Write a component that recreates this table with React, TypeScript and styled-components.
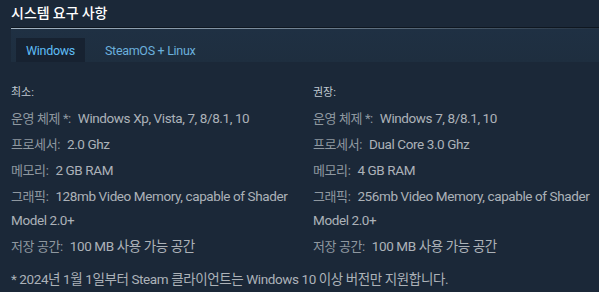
import React, { FC } from "react";
import styled, { createGlobalStyle } from "styled-components";

const GlobalStyle = createGlobalStyle`
  html, body {
    margin: 0;
    padding: 0;
    background: #1b2838;
  }
  body {
    font-family: Roboto, "Noto Sans CJK KR", sans-serif;
    width: 599px;
    height: 292px;
    overflow: hidden;
  }
`;

const Section = styled.section`
  padding-left: 11px;
  color: #acb2b8;
`;

const Title = styled.h2`
  margin: 0;
  height: 27px;
  padding-top: 3px;
  box-sizing: border-box;
  font-size: 14px;
  font-weight: 500;
  color: #ffffff;
  line-height: 18px;
  font-family: "Noto Sans CJK KR", sans-serif;
`;

const Divider = styled.div`
  height: 1px;
  border-top: 1px solid #0f1720;
  background: linear-gradient(90deg, #a3b3c2 0%, #7d8e9e 40%, #3d4d5d 85%, rgba(61, 77, 93, 0.3) 100%);
`;

const TabBar = styled.div`
  display: flex;
  align-items: flex-end;
  gap: 10px;
  height: 33px;
  padding-left: 5px;
  background: linear-gradient(180deg, #1f3043 0%, #1e2e3f 100%);
`;

const Tab = styled.div<{ $active?: boolean }>`
  height: 24px;
  padding: 0 10px;
  display: flex;
  align-items: center;
  font-size: 12.5px;
  letter-spacing: -0.3px;
  color: ${(p) => (p.$active ? "#5fbdf5" : "#6bb0dc")};
  background: ${(p) => (p.$active ? "#172231" : "transparent")};
`;

const Columns = styled.div`
  display: grid;
  grid-template-columns: 302px 1fr;
  padding-top: 24px;
`;

const Column = styled.div`
  min-width: 0;
`;

const Heading = styled.div`
  font-size: 11px;
  color: #c0c8d0;
  height: 14px;
  line-height: 14px;
  margin-bottom: 6px;
`;

const List = styled.ul`
  list-style: none;
  margin: 0;
  padding: 0 8px 0 0;
`;

const Item = styled.li`
  font-size: 13.5px;
  letter-spacing: -0.4px;
  line-height: 24px;
  margin-bottom: 2px;
  color: #acb2b8;
`;

const Label = styled.span`
  color: #8f98a0;
  font-size: 13px;
  line-height: 1;
  margin-right: 7px;
`;

const Note = styled.p`
  margin: 10px 0 0;
  font-size: 13.5px;
  letter-spacing: -0.4px;
  line-height: 18px;
  color: #acb2b8;
`;

type Spec = { label: string; value: string };

const minimum: Spec[] = [
  { label: "운영 체제 *:", value: "Windows Xp, Vista, 7, 8/8.1, 10" },
  { label: "프로세서:", value: "2.0 Ghz" },
  { label: "메모리:", value: "2 GB RAM" },
  { label: "그래픽:", value: "128mb Video Memory, capable of Shader Model 2.0+" },
  { label: "저장 공간:", value: "100 MB 사용 가능 공간" },
];

const recommended: Spec[] = [
  { label: "운영 체제 *:", value: "Windows 7, 8/8.1, 10" },
  { label: "프로세서:", value: "Dual Core 3.0 Ghz" },
  { label: "메모리:", value: "4 GB RAM" },
  { label: "그래픽:", value: "256mb Video Memory, capable of Shader Model 2.0+" },
  { label: "저장 공간:", value: "100 MB 사용 가능 공간" },
];

const SpecColumn: FC<{ title: string; specs: Spec[] }> = ({ title, specs }) => (
  <Column>
    <Heading>{title}</Heading>
    <List>
      {specs.map((s) => (
        <Item key={s.label}>
          <Label>{s.label}</Label>
          {s.value}
        </Item>
      ))}
    </List>
  </Column>
);

const App: FC = () => (
  <>
    <GlobalStyle />
    <Section>
      <Title>시스템 요구 사항</Title>
      <Divider />
      <TabBar>
        <Tab $active>Windows</Tab>
        <Tab>SteamOS + Linux</Tab>
      </TabBar>
      <Columns>
        <SpecColumn title="최소:" specs={minimum} />
        <SpecColumn title="권장:" specs={recommended} />
      </Columns>
      <Note>* 2024년 1월 1일부터 Steam 클라이언트는 Windows 10 이상 버전만 지원합니다.</Note>
    </Section>
  </>
);

export default App;
